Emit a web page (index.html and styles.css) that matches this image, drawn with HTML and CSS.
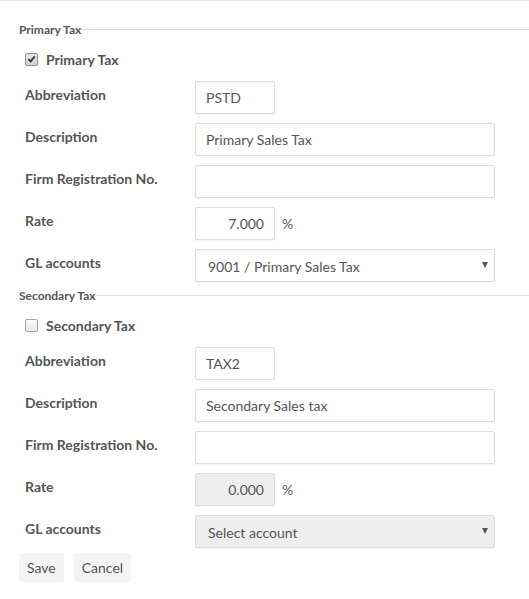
FILE: index.html
```html
<!DOCTYPE html>
<html>
<head>
<meta charset="utf-8">
<link rel="stylesheet" href="styles.css">
</head>
<body>
<form class="tax-form">
  <section class="group">
    <div class="legend"><span>Primary Tax</span></div>
    <label class="check-row">
      <span class="check checked"><svg viewBox="0 0 12 12" width="12" height="12"><path d="M2.6 6.2 L5 8.6 L9.6 3.2" fill="none" stroke="#333" stroke-width="2"/></svg></span>
      <span>Primary Tax</span>
    </label>
    <div class="rows">
      <div class="row"><span class="lbl">Abbreviation</span><div class="field"><div class="input short">PSTD</div></div></div>
      <div class="row"><span class="lbl">Description</span><div class="field"><div class="input wide">Primary Sales Tax</div></div></div>
      <div class="row"><span class="lbl">Firm Registration No.</span><div class="field"><div class="input wide"></div></div></div>
      <div class="row"><span class="lbl">Rate</span><div class="field"><div class="input short num">7.000</div><span class="pct">%</span></div></div>
      <div class="row"><span class="lbl">GL accounts</span><div class="field"><div class="input wide select"><span>9001 / Primary Sales Tax</span><i class="caret"></i></div></div></div>
    </div>
  </section>
  <section class="group second">
    <div class="legend"><span>Secondary Tax</span></div>
    <label class="check-row">
      <span class="check"></span>
      <span>Secondary Tax</span>
    </label>
    <div class="rows">
      <div class="row"><span class="lbl">Abbreviation</span><div class="field"><div class="input short">TAX2</div></div></div>
      <div class="row"><span class="lbl">Description</span><div class="field"><div class="input wide">Secondary Sales tax</div></div></div>
      <div class="row"><span class="lbl">Firm Registration No.</span><div class="field"><div class="input wide"></div></div></div>
      <div class="row"><span class="lbl">Rate</span><div class="field"><div class="input short num disabled">0.000</div><span class="pct">%</span></div></div>
      <div class="row"><span class="lbl">GL accounts</span><div class="field"><div class="input wide select disabled"><span>Select account</span><i class="caret"></i></div></div></div>
    </div>
  </section>
  <div class="buttons">
    <button type="button" class="btn">Save</button>
    <button type="button" class="btn">Cancel</button>
  </div>
</form>
</body>
</html>
```
FILE: styles.css
```css
* { box-sizing: border-box; }
html, body { margin: 0; padding: 0; background: #fff; }
body {
  font-family: Lato, "Open Sans", sans-serif;
  font-size: 14px;
  color: #555;
  border-top: 1px solid #e3e3e3;
  width: 529px;
  height: 599px;
  overflow: hidden;
}
.tax-form { padding-left: 19px; padding-top: 21px; }
.group.second { margin-top: 6px; }
.legend {
  display: flex;
  align-items: center;
  height: 14px;
  font-size: 12px;
  font-weight: 700;
  color: #555;
}
.legend::after {
  content: "";
  flex: 1;
  height: 1px;
  background: #ddd;
}
.check-row {
  display: flex;
  align-items: center;
  height: 20px;
  margin-top: 13px;
  padding-left: 6px;
  font-weight: 700;
  gap: 8px;
}
.check {
  width: 13px;
  height: 13px;
  border: 1px solid #a6a6a6;
  border-radius: 2px;
  background: linear-gradient(#fcfcfc, #e8e8e8);
  display: flex;
  align-items: center;
  justify-content: center;
}
.check.checked { background: linear-gradient(#e6e6e6, #d0d0d0); border-color: #8f8f8f; }
.check svg { display: block; }
.rows {
  margin-top: 12px;
  display: flex;
  flex-direction: column;
  gap: 9px;
  padding-left: 6px;
}
.row {
  display: grid;
  grid-template-columns: 170px 300px;
  align-items: start;
}
.lbl {
  font-weight: 700;
  line-height: 20px;
  padding-top: 4px;
}
.field { display: flex; align-items: center; }
.input {
  height: 33px;
  border: 1px solid #ddd;
  border-radius: 2px;
  box-shadow: 0 1px 1px rgba(0,0,0,0.04);
  background: #fff;
  padding: 0 10px;
  display: flex;
  align-items: center;
  line-height: 20px;
  white-space: nowrap;
}
.input.short { width: 80px; }
.input.wide { width: 300px; }
.input.num { justify-content: flex-end; }
.input.disabled { background: #eee; }
.pct { margin-left: 7px; }
.input.select { padding-left: 12px; padding-right: 6px; padding-top: 2px; justify-content: space-between; }
.caret {
  width: 0;
  height: 0;
  border-left: 3.5px solid transparent;
  border-right: 3.5px solid transparent;
  border-top: 6px solid #555;
  margin-top: -4px;
}
.buttons {
  margin-top: 5px;
  display: flex;
  gap: 10px;
}
.btn {
  font-family: Lato, "Open Sans", sans-serif;
  font-size: 14px;
  color: #555;
  background: #f4f4f4;
  border: none;
  border-radius: 3px;
  height: 29px;
  padding: 0 8px;
  cursor: pointer;
}
```
